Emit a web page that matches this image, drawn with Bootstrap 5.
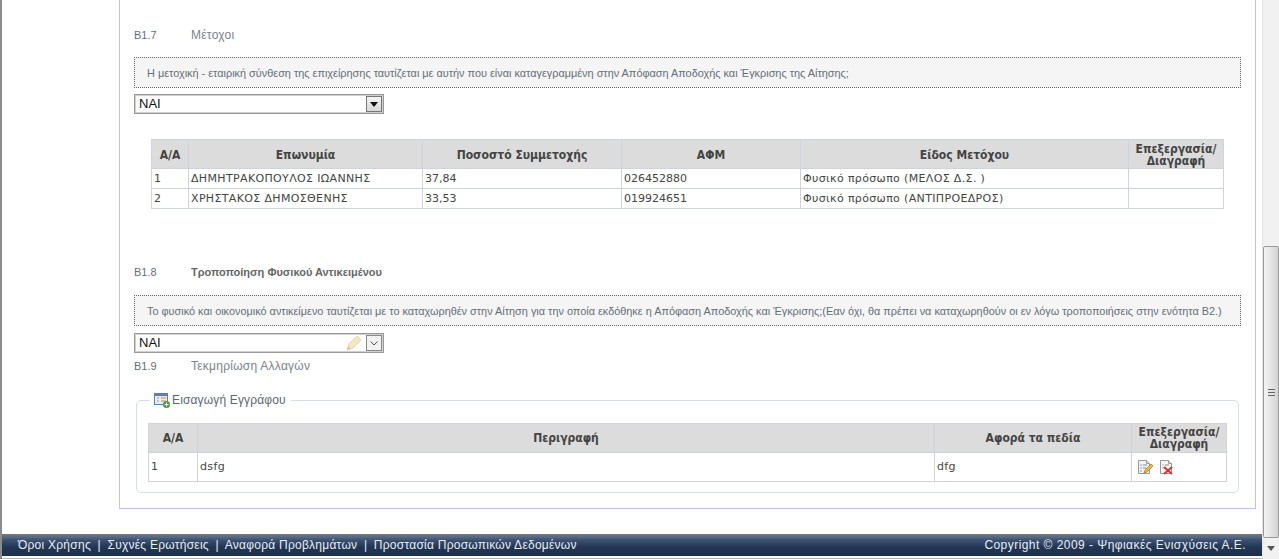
<!DOCTYPE html>
<html lang="el">
<head>
<meta charset="utf-8">
<title>Μέτοχοι</title>
<link href="https://cdn.jsdelivr.net/npm/bootstrap@5.3.0/dist/css/bootstrap.min.css" rel="stylesheet">
<style>
html,body{height:559px;overflow:hidden;background:#fff}
body{font-family:"DejaVu Sans",sans-serif;font-size:11px;color:#444}
.frame{height:559px;border-left:2px solid #8c8c8c}
.page-col{width:1260px;min-width:0}
.sheet{margin-left:117px;width:1137px;height:509px;border:1px solid #b4c7e7;border-top:0;padding:28px 14px 0 14px;flex:none}
.sec-row{display:flex;color:#666e78;font-family:"Liberation Sans",sans-serif;font-size:11px;line-height:14px}
.sec-num{width:57px;flex:none}
.sec-title{font-size:12px;letter-spacing:.25px;color:#7a828c}
.sec-bold{font-weight:700;color:#666}
.note{background:#f5f5f5;border:1px dotted #666;height:31px;margin-top:15px;padding-left:12px;line-height:31px;font-family:"Liberation Sans",sans-serif;font-size:10.9px;color:#666e78;white-space:nowrap}
.note-b{margin-top:16px}
.sel{width:250px;height:20px;border:1px solid #999;box-shadow:inset 0 0 0 1px #d0d0d0;background:#fff;color:#111;font-size:13px;line-height:18px;padding-left:4px;display:flex;justify-content:space-between;align-items:center;font-family:"Liberation Sans",sans-serif}
.sel-a{margin-top:6px}
.sel-b{margin-top:7px}
.sel-arrow{width:16px;height:16px;margin-right:1px;display:flex;align-items:center;justify-content:center;background:linear-gradient(#f4f4f4,#d8d8d8);border:1px solid #777}
.sel-light{background:#f2f2f2;border-color:#8a8a8a}
.grid-t{margin:0;table-layout:fixed;--bs-table-border-color:#cfd4da;border-color:#cfd4da;font-size:11px;color:#444;font-family:"DejaVu Sans",sans-serif}
.grid-t th{background:#dcdcdc;color:#444;text-align:center;vertical-align:middle;padding:0 2px;font-family:"DejaVu Sans Condensed","DejaVu Sans",sans-serif;font-weight:700;font-size:12px;line-height:12px;border-color:#cfd4da;height:29px}
.grid-t td{padding:0 2px;height:20px;line-height:18px;vertical-align:middle;border-color:#cfd4da;color:#444}
.grid-t td.tx{letter-spacing:.35px}
.grid-t td.tall{height:29px}
.t1{width:1072px;margin-left:17px;margin-top:25px}
.t1 th,.t1 td{padding-top:1px}
.t2{width:1078px}
.gap-b8{margin-top:56px}
.docs{margin:27px 0 0 2px;width:1103px;height:93px;border:1px solid #d5dfea;border-radius:5px;padding:0 11px;position:relative}
.docs-legend{position:absolute;top:-9px;left:13px;background:#fff;padding:0 5px 0 4px;display:flex;align-items:center;gap:2px;font-family:"Liberation Sans",sans-serif;font-size:12px;letter-spacing:.15px;color:#5c6670;line-height:16px}
.t2-wrap{padding-top:22px}
.act{padding-left:3px}
.foot{height:22px;margin-top:25px;background:linear-gradient(#6a7484 0,#5a6a80 2px,#3c5273 5px,#223654 12px,#1d2f4c 100%);color:#e8edf3;font-family:"Liberation Sans",sans-serif;font-size:12px;line-height:21px;padding:0 16px;letter-spacing:.25px;border-top:1px solid #777}
.foot-r{letter-spacing:.45px}
.foot .sep{margin:0 3px 0 3px}
.tail{height:1px;margin-top:2px;background:#b4b4b4}
.sbar{width:17px;height:559px;flex:none;background:#f1f1f1;border-left:1px solid #e4e4e4;position:relative}
.thumb{position:absolute;left:0;right:0;top:246px;height:292px;background:linear-gradient(90deg,#f4f4f4,#d4d4d4);border:1px solid #9a9a9a;border-radius:2px}
.grip{position:absolute;left:4px;top:142px;width:7px;height:7px;border-top:1px solid #666;border-bottom:1px solid #666}
.grip::after{content:"";position:absolute;left:0;right:0;top:2px;height:1px;background:#666}
.down{position:absolute;left:0;right:0;bottom:4px;height:14px;display:flex;align-items:center;justify-content:center}
</style>
</head>
<body>
<div class="frame d-flex">
  <div class="page-col">
    <div class="sheet">
      <div class="sec-row"><div class="sec-num">Β1.7</div><div class="sec-title">Μέτοχοι</div></div>
      <div class="note">Η μετοχική - εταιρική σύνθεση της επιχείρησης ταυτίζεται με αυτήν που είναι καταγεγραμμένη στην Απόφαση Αποδοχής και Έγκρισης της Αίτησης;</div>
      <div class="sel sel-a">ΝΑΙ<span class="sel-arrow"><svg width="8" height="5" viewBox="0 0 8 5"><path d="M0 0h8L4 5z" fill="#111"/></svg></span></div>
      <table class="table table-bordered grid-t t1">
        <colgroup><col style="width:37px"><col style="width:234px"><col style="width:199px"><col style="width:179px"><col style="width:328px"><col style="width:95px"></colgroup>
        <thead><tr><th>Α/Α</th><th>Επωνυμία</th><th>Ποσοστό Συμμετοχής</th><th>ΑΦΜ</th><th>Είδος Μετόχου</th><th>Επεξεργασία/ Διαγραφή</th></tr></thead>
        <tbody>
          <tr><td>1</td><td class="tx">ΔΗΜΗΤΡΑΚΟΠΟΥΛΟΣ ΙΩΑΝΝΗΣ</td><td>37,84</td><td>026452880</td><td class="tx">Φυσικό πρόσωπο (ΜΕΛΟΣ Δ.Σ. )</td><td></td></tr>
          <tr><td>2</td><td class="tx">ΧΡΗΣΤΑΚΟΣ ΔΗΜΟΣΘΕΝΗΣ</td><td>33,53</td><td>019924651</td><td class="tx">Φυσικό πρόσωπο (ΑΝΤΙΠΡΟΕΔΡΟΣ)</td><td></td></tr>
        </tbody>
      </table>
      <div class="sec-row gap-b8"><div class="sec-num">Β1.8</div><div class="sec-bold">Τροποποίηση Φυσικού Αντικειμένου</div></div>
      <div class="note note-b">Το φυσικό και οικονομικό αντικείμενο ταυτίζεται με το καταχωρηθέν στην Αίτηση για την οποία εκδόθηκε η Απόφαση Αποδοχής και Έγκρισης;(Εαν όχι, θα πρέπει να καταχωρηθούν οι εν λόγω τροποποιήσεις στην ενότητα Β2.)</div>
      <div class="sel sel-b">ΝΑΙ<span class="d-flex align-items-center gap-1">
        <svg width="16" height="16" viewBox="0 0 16 16"><path d="M1 15l2-6 8-8 4 4-8 8z" fill="#f5e6c4" stroke="#e6d3a8"/><path d="M1 15l1-4 3 3z" fill="#d8c8b0"/></svg>
        <span class="sel-arrow sel-light"><svg width="8" height="5" viewBox="0 0 8 5"><path d="M.5 .5L4 4 7.500 .5" fill="none" stroke="#555"/></svg></span></span></div>
      <div class="sec-row sel-a"><div class="sec-num">Β1.9</div><div class="sec-title">Τεκμηρίωση Αλλαγών</div></div>
      <div class="docs">
        <div class="docs-legend"><svg width="16" height="16" viewBox="0 0 16 16"><rect x=".5" y="1.500" width="13" height="11" fill="#e8eef8" stroke="#5b7fb5"/><rect x="1" y="2" width="12" height="2" fill="#5b7fb5"/><path d="M3 6h2M3 9h2M7 6h5M7 9h5" stroke="#c98a3a"/><circle cx="12.500" cy="12.500" r="3.500" fill="#4c9a3c"/><path d="M10.500 12.500h4M12.500 10.500v4" stroke="#fff"/></svg>Εισαγωγή Εγγράφου</div>
        <div class="t2-wrap">
        <table class="table table-bordered grid-t t2">
          <colgroup><col style="width:49px"><col style="width:737px"><col style="width:197px"><col style="width:95px"></colgroup>
          <thead><tr><th>Α/Α</th><th>Περιγραφή</th><th>Αφορά τα πεδία</th><th>Επεξεργασία/ Διαγραφή</th></tr></thead>
          <tbody><tr><td class="tall">1</td><td class="tx">dsfg</td><td class="tx">dfg</td><td><span class="d-flex gap-1 act">
            <svg width="18" height="16" viewBox="0 0 18 16"><path d="M1.500 1.500h8l3 3v10h-11z" fill="#f4f4f4" stroke="#999"/><path d="M9.500 1.500v3h3" fill="#ddd" stroke="#999"/><path d="M3.500 6h1M3.500 9h1M3.500 12h1" stroke="#447"/><path d="M6 6h4M6 9h3" stroke="#888"/><path d="M7 14l1-3 6-6 2 2-6 6z" fill="#e8b93a" stroke="#8a6a20" stroke-width=".6"/></svg>
            <svg width="18" height="16" viewBox="0 0 18 16"><path d="M1.500 1.500h8l3 3v10h-11z" fill="#f4f4f4" stroke="#999"/><path d="M9.500 1.500v3h3" fill="#ddd" stroke="#999"/><path d="M3.500 6h1M3.500 9h1M6 6h4" stroke="#888"/><path d="M5 8l8 7M13 8l-8 7" stroke="#e03030" stroke-width="2"/></svg>
          </span></td></tr></tbody>
        </table>
        </div>
      </div>
    </div>
    <div class="foot d-flex justify-content-between">
      <div>Όροι Χρήσης<span class="sep"> |</span> Συχνές Ερωτήσεις<span class="sep"> |</span> Αναφορά Προβλημάτων<span class="sep"> |</span> Προστασία Προσωπικών Δεδομένων</div>
      <div class="foot-r">Copyright © 2009 - Ψηφιακές Ενισχύσεις Α.Ε.</div>
    </div>
    <div class="tail"></div>
  </div>
  <div class="sbar">
    <div class="thumb"><div class="grip"></div></div>
    <div class="down"><svg width="8" height="5" viewBox="0 0 8 5"><path d="M0 0h8L4 5z" fill="#555"/></svg></div>
  </div>
</div>
</body>
</html>
